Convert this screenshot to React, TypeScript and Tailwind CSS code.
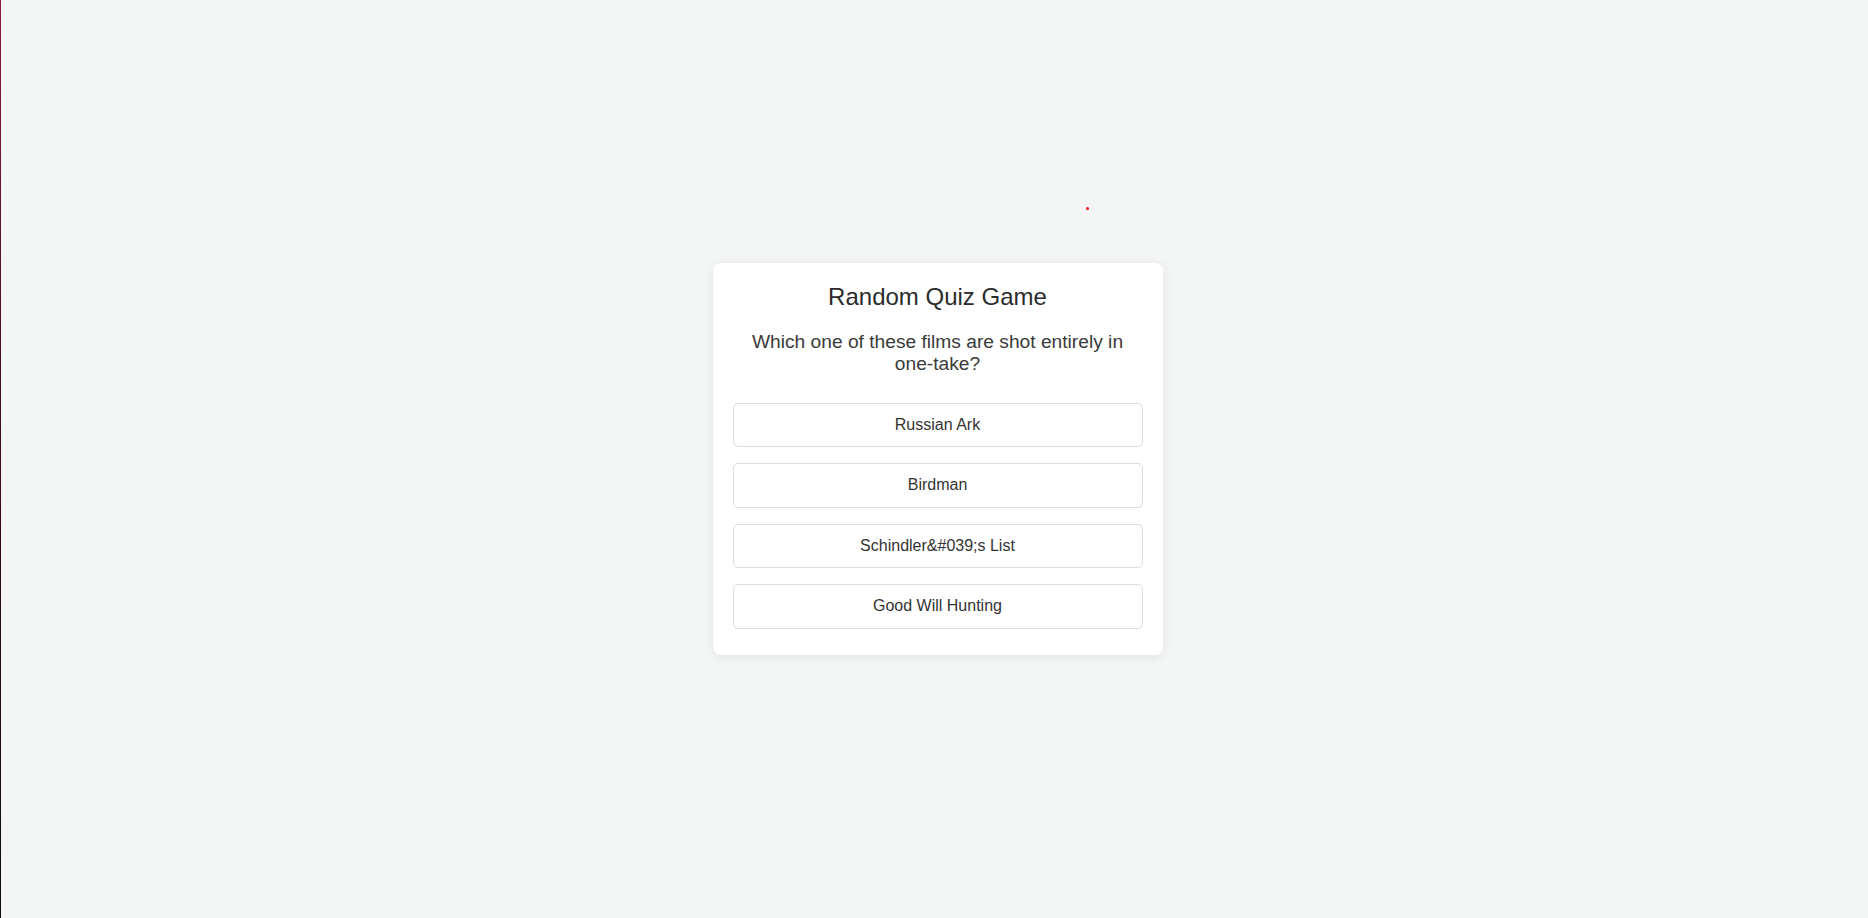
import React from 'react';

const answers = ['Russian Ark', 'Birdman', 'Schindler&#039;s List', 'Good Will Hunting'];

const App = () => {
  return (
    <div
      className="relative flex h-[918px] w-full bg-[#f4f6f6] text-[#333]"
      style={{ fontFamily: '"Liberation Sans", Arial, sans-serif' }}
    >
      {/* thin accent line on the left edge */}
      <div className="w-px shrink-0 bg-gradient-to-b from-[#8c1a40] via-[#3a0a1c] to-[#0a0a10]" />

      {/* stray red dot */}
      <span className="absolute left-[1086px] top-[207px] h-[3px] w-[3px] rounded-full bg-[#e8141c]" />

      <main className="flex flex-1 items-center justify-center pl-[6px]">
        <div className="w-[450px] rounded-lg bg-white px-5 pt-5 pb-[18px] text-center shadow-[0_2px_12px_rgba(0,0,0,0.08)]">
          <h1 className="text-[24px] leading-[1.15] text-[#2b2b2b]">Random Quiz Game</h1>
          <p className="mt-[20px] mb-[20px] text-[19.2px] leading-[1.15] text-[#3a3a3a]">
            Which one of these films are shot entirely in <span className="whitespace-nowrap">one-take?</span>
          </p>
          <div className="flex flex-col">
            {answers.map((a) => (
              <button
                key={a}
                className="my-2 w-full rounded-[5px] border border-[#dcdcdc] bg-white py-3 text-[16px] leading-[1.15] text-[#333] hover:bg-gray-50"
              >
                {a}
              </button>
            ))}
          </div>
        </div>
      </main>
    </div>
  );
};

export default App;
